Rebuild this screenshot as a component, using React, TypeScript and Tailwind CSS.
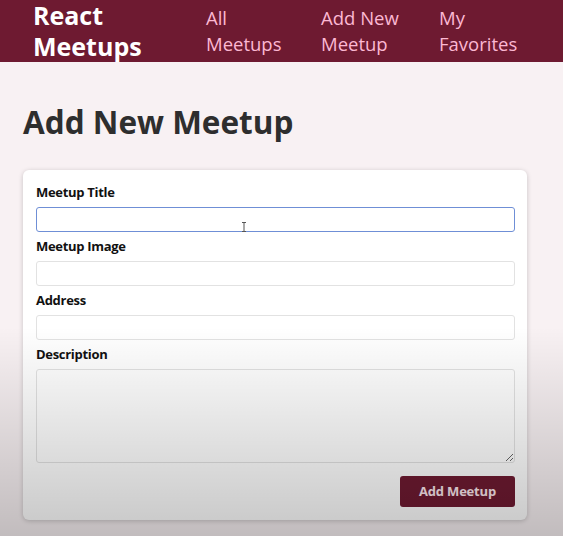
import React from "react";

export default function App() {
  return (
    <div className="relative h-[536px] overflow-hidden bg-[#f8f1f3]" style={{ fontFamily: '"Open Sans", sans-serif' }}>
      <header className="flex h-[62px] items-center bg-[#6e1a31]">
        <div className="ml-[33px] w-[173px] text-[25px] font-bold leading-[31px] text-white">
          React
          <br />
          Meetups
        </div>
        <nav>
          <ul className="flex text-[18.5px] leading-[26px] text-[#fcb8d3]">
            <li className="w-[115px]">All<br />Meetups</li>
            <li className="w-[118px]">Add New<br />Meetup</li>
            <li>My<br />Favorites</li>
          </ul>
        </nav>
      </header>

      <main className="px-[23px]">
        <h1 className="mt-[38px] text-[31.5px] font-bold leading-[44px] text-[#2e2e2e]">Add New Meetup</h1>

        <section className="relative mt-[26px] w-[504px] rounded-[6px] bg-white pb-[13px] pl-[13px] pr-[12px] pt-[12px] shadow-[0_1px_5px_rgba(0,0,0,0.2)]">
          <form className="flex flex-col gap-[4px]">
            <div className="flex flex-col gap-[5px]">
              <label className="text-[13px] font-bold leading-[20px] tracking-[-0.3px] text-[#111]">Meetup Title</label>
              <input className="h-[25px] rounded-[3px] border border-[#6f8fd6] bg-white outline-none" type="text" />
            </div>
            <div className="flex flex-col gap-[5px]">
              <label className="text-[13px] font-bold leading-[20px] tracking-[-0.3px] text-[#111]">Meetup Image</label>
              <input className="h-[25px] rounded-[3px] border border-[#e2e2e2] bg-white outline-none" type="url" />
            </div>
            <div className="flex flex-col gap-[5px]">
              <label className="text-[13px] font-bold leading-[20px] tracking-[-0.3px] text-[#111]">Address</label>
              <input className="h-[25px] rounded-[3px] border border-[#e2e2e2] bg-white outline-none" type="text" />
            </div>
            <div className="flex flex-col gap-[5px]">
              <label className="text-[13px] font-bold leading-[20px] tracking-[-0.3px] text-[#111]">Description</label>
              <textarea className="h-[94px] rounded-[3px] border border-[#e2e2e2] bg-white outline-none" />
            </div>
            <div className="mt-[9px] flex justify-end">
              <button type="button" className="h-[31px] w-[115px] rounded-[3px] bg-[#6e1a31] text-[13px] font-bold tracking-[-0.2px] text-[#fde8ee]">
                Add Meetup
              </button>
            </div>
          </form>
          <svg className="absolute left-[218px] top-[52px]" width="6" height="10" viewBox="0 0 6 10">
            <path d="M1 0.5h4M3 0.5v9M1 9.5h4" stroke="#555" strokeWidth="1" fill="none" />
          </svg>
        </section>
      </main>

      <div className="pointer-events-none absolute inset-0 bg-[linear-gradient(to_bottom,rgba(0,0,0,0)_61%,rgba(0,0,0,0.22)_100%)]" />
    </div>
  );
}
